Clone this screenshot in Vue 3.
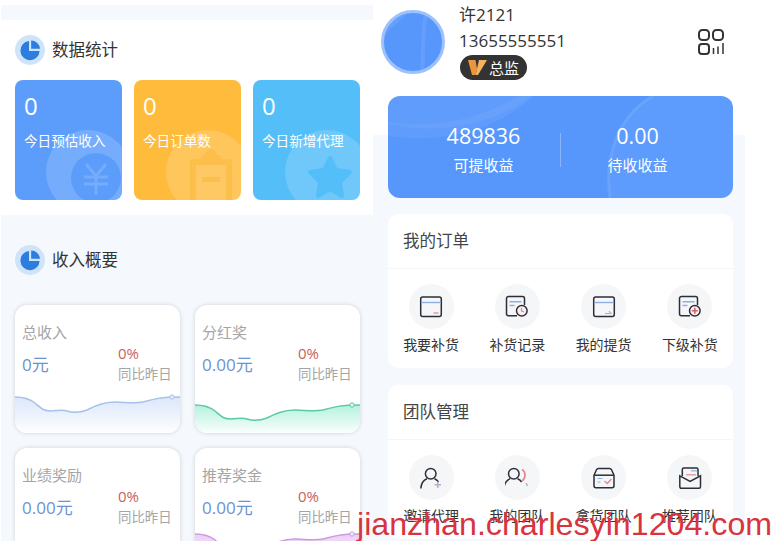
<template>
  <div class="page">
    <!-- 左栏 -->
    <section class="col left">
      <div class="stats">
        <div class="sec-head">
          <svg class="pie" viewBox="0 0 30 30">
            <circle cx="15" cy="15" r="15" fill="#cfe4fa" />
            <path d="M14 6A9.6 9.6 0 1 0 24.6 16H14Z" fill="#2b7de0" />
            <path d="M16.2 5.6A8.8 8.8 0 0 1 25 13.8H16.2Z" fill="#2b7de0" />
          </svg>
          <h2>数据统计</h2>
        </div>
        <div class="stat-row">
          <div class="stat blue">
            <svg class="deco" viewBox="0 0 107 120">
              <circle cx="73" cy="92" r="42" fill="#fff" opacity=".16" />
              <circle cx="81" cy="98" r="25" fill="#5c9dfc" />
              <path d="M71 84l10 12 10-12M69 97h24M69 104h24M81 96v19" fill="none" stroke="#fff" stroke-opacity=".16" stroke-width="3" />
            </svg>
            <b>0</b>
            <span>今日预估收入</span>
          </div>
          <div class="stat orange">
            <svg class="deco" viewBox="0 0 107 120">
              <circle cx="74" cy="92" r="42" fill="#fff" opacity=".16" />
              <path d="M58 79h9v-1a3 3 0 0 1 3-3h1a6 6 0 0 1 12 0h1a3 3 0 0 1 3 3v1h9a2 2 0 0 1 2 2v39H56V81a2 2 0 0 1 2-2Z" fill="#fdbf4c" />
              <path d="M62 85h30v35H62Z" fill="#fec864" />
              <path d="M68 97h18v5H68Z" fill="#fdbf4c" />
            </svg>
            <b>0</b>
            <span>今日订单数</span>
          </div>
          <div class="stat sky">
            <svg class="deco" viewBox="0 0 107 120">
              <circle cx="74" cy="92" r="42" fill="#fff" opacity=".16" />
              <path d="M77 78l6 12 14 2-10 10 2 14-12-7-12 7 2-14-10-10 14-2Z" fill="#54bef8" stroke="#54bef8" stroke-width="4" stroke-linejoin="round" />
            </svg>
            <b>0</b>
            <span>今日新增代理</span>
          </div>
        </div>
      </div>

      <div class="overview">
        <div class="sec-head">
          <svg class="pie" viewBox="0 0 30 30">
            <circle cx="15" cy="15" r="15" fill="#cfe4fa" />
            <path d="M14 6A9.6 9.6 0 1 0 24.6 16H14Z" fill="#2b7de0" />
            <path d="M16.2 5.6A8.8 8.8 0 0 1 25 13.8H16.2Z" fill="#2b7de0" />
          </svg>
          <h2>收入概要</h2>
        </div>
        <div class="income-grid">
          <div v-for="item in incomes" :key="item.name" class="income">
            <p class="income-name">{{ item.name }}</p>
            <div class="income-mid">
              <strong>{{ item.value }}</strong>
              <div class="compare">
                <em>0%</em>
                <small>同比昨日</small>
              </div>
            </div>
            <svg class="chart" viewBox="0 0 165 60" preserveAspectRatio="xMinYMin slice" :style="{ height: item.chart + 'px' }">
              <defs>
                <linearGradient :id="item.id" x1="0" y1="0" x2="0" :y2="item.chart / 60">
                  <stop offset="0" :stop-color="item.fill" />
                  <stop offset="1" stop-color="#fff" />
                </linearGradient>
              </defs>
              <path :d="line + 'V60H0Z'" :fill="`url(#${item.id})`" />
              <path :d="line" fill="none" :stroke="item.stroke" stroke-width="1.5" />
              <circle cx="157" cy="4" r="2.2" fill="#e8eef8" :stroke="item.stroke" />
            </svg>
          </div>
        </div>
      </div>
    </section>

    <!-- 右栏 -->
    <section class="col right">
      <header class="user">
        <div class="avatar">
          <svg viewBox="0 0 58 58" width="58" height="58">
            <path d="M40 0C36 18 38 40 36 58H40C42 40 40 18 44 0Z" fill="#fff" opacity=".08" />
            <path d="M0 24C6 16 14 10 24 0H10L0 10Z" fill="#fff" opacity=".08" />
          </svg>
        </div>
        <div class="user-info">
          <p>许2121</p>
          <p>13655555551</p>
          <div class="badge">
            <svg viewBox="0 0 19 17" width="19" height="17">
              <path d="M0 1h7.500l1.500 9-1.500 6H4Z" fill="#e9963c" />
              <path d="M11 1h8l-9 15H7.500Z" fill="#f5b060" />
            </svg>
            <span>总监</span>
          </div>
        </div>
        <svg class="qr" viewBox="0 0 26 26" fill="none" stroke="#333" stroke-width="2">
          <rect x="1" y="1" width="10" height="10" rx="3.5" />
          <rect x="15" y="1" width="10" height="10" rx="3.5" />
          <rect x="1" y="15" width="10" height="10" rx="3" />
          <path d="M15.500 19v6M20 17.500v7.500M25 14v11" stroke-width="1.500" />
        </svg>
      </header>

      <div class="earn">
        <svg class="earn-bg" viewBox="0 0 345 102" preserveAspectRatio="none">
          <path d="M0 0H145C110 35 50 48 0 40Z" fill="#fff" opacity=".05" />
          <path d="M0 28C55 40 105 28 145 0H130C95 22 50 33 0 26Z" fill="#fff" opacity=".05" />
          <path d="M222 102C216 60 230 20 265 0H345V102Z" fill="#fff" opacity=".04" />
          <path d="M222 102C216 60 230 20 265 0" fill="none" stroke="#fff" stroke-opacity=".1" stroke-width="3" />
        </svg>
        <div class="earn-col">
          <b>489836</b>
          <span>可提收益</span>
        </div>
        <i class="earn-line"></i>
        <div class="earn-col">
          <b>0.00</b>
          <span>待收收益</span>
        </div>
      </div>

      <div class="panel">
        <h3>我的订单</h3>
        <div class="menu">
          <div v-for="m in orders" :key="m.label" class="menu-item">
            <div class="menu-icon">
              <svg viewBox="0 0 24 24" width="24" height="24" fill="none" v-html="m.icon"></svg>
            </div>
            <span>{{ m.label }}</span>
          </div>
        </div>
      </div>

      <div class="panel">
        <h3>团队管理</h3>
        <div class="menu">
          <div v-for="m in teams" :key="m.label" class="menu-item">
            <div class="menu-icon">
              <svg viewBox="0 0 24 24" width="24" height="24" fill="none" v-html="m.icon"></svg>
            </div>
            <span>{{ m.label }}</span>
          </div>
        </div>
      </div>
    </section>

    <div class="watermark">jianzhan.charlesyin1204.com</div>
  </div>
</template>

<script setup>
const line =
  "M0 4C8 4 15 6 20 10C26 15 28 18 36 18C42 18 46 16 52 18C58 20 64 20 72 17C80 13 88 9 100 9C110 9 118 11 128 9C138 6 146 4 165 4";

const incomes = [
  { id: "g1", name: "总收入", value: "0元", chart: 40, fill: "#dce7fa", stroke: "#a5c2e8" },
  { id: "g2", name: "分红奖", value: "0.00元", chart: 32, fill: "#b4f2de", stroke: "#5cc9a7" },
  { id: "g3", name: "业绩奖励", value: "0.00元", chart: 34, fill: "#dce7fa", stroke: "#a5c2e8" },
  { id: "g4", name: "推荐奖金", value: "0.00元", chart: 46, fill: "#eccff5", stroke: "#c99ae0" },
];

const dark = 'stroke="#2c2f3a" stroke-width="1.5"';
const blue = 'stroke="#8fb0e0" stroke-width="1.4"';
const card = `<rect x="1.7" y="2" width="20.600" height="19.500" rx="2" ${dark}/><path d="M2.500 7.500h19" ${blue}/>`;
const doc = (extra) =>
  `<path d="M12 20.800H3.500a2 2 0 0 1-2-2V3.500a2 2 0 0 1 2-2h14a2 2 0 0 1 2 2V10" ${dark}/><path d="M4.500 6.800h12M4.500 10.500h5" ${blue}/><circle cx="16.800" cy="15.800" r="5.300" fill="#fbeef0" ${dark}/>${extra}`;

const orders = [
  { label: "我要补货", icon: card + '<path d="M14.500 18h5" stroke="#d9a0a8" stroke-width="1.500"/>' },
  { label: "补货记录", icon: doc('<path d="M16.500 13v3l2.500 1" stroke="#d9808c" stroke-width="1.100"/>') },
  { label: "我的提货", icon: card + '<path d="M13 18.500h6l-2-2.500" stroke="#d9a0a8" stroke-width="1.200"/>' },
  { label: "下级补货", icon: doc('<path d="M16.800 12.800v6M13.800 15.800h6" stroke="#d9606c" stroke-width="1.600"/>') },
];

const head = (x) =>
  `<g transform="translate(${x} 0)" ${dark}><circle cx="11.700" cy="7.800" r="5.300"/><path d="M1.800 22.500C2.200 17.500 4.500 14.200 8 12.800M15.500 12.800C17 13.500 18.500 14.500 19.500 16"/></g>`;

const teams = [
  { label: "邀请代理", icon: head(0) + '<path d="M18.800 15.500v6.500M15.500 18.700h6.500" stroke="#c0a8cc" stroke-width="1.500"/>' },
  { label: "我的团队", icon: head(-2.900) + '<path d="M17 3.500c4 2 4 9 0 11.500" stroke="#e08a90" stroke-width="1.700"/><path d="M21 17l1.500 3" stroke="#a8a8c0" stroke-width="1.300"/>' },
  { label: "拿货团队", icon: `<path d="M2 9.200l2.500-5.500a2 2 0 0 1 1.800-1.200h11.400a2 2 0 0 1 1.800 1.200L22 9.200v10.600a2 2 0 0 1-2 2H4a2 2 0 0 1-2-2Z" ${dark}/><path d="M2 9.200h20" ${dark}/><path d="M5.500 12.500h5M5.500 16h3" stroke="#8fb0e0" stroke-width="1.200"/><path d="M12.500 15l2.800 2.500 4.200-4.500" stroke="#e08a90" stroke-width="1.400"/>` },
  { label: "推荐团队", icon: `<path d="M4.300 10V3.500a1.500 1.500 0 0 1 1.500-1.500h12.700a1.500 1.500 0 0 1 1.500 1.500V10" ${dark}/><path d="M1.800 9.800l10.300 5.500 10.400-5.500v11a1.500 1.500 0 0 1-1.500 1.500H3.300a1.500 1.500 0 0 1-1.500-1.500Z" ${dark}/><path d="M13 4.800h6" stroke="#8fb0e0" stroke-width="1.200"/><path d="M8 8.800h10" stroke="#e08a90" stroke-width="1.200"/>` },
];
</script>

<style scoped>
.page {
  position: relative;
  display: flex;
  width: 772px;
  height: 541px;
  overflow: hidden;
  background: #fff;
  font-family: "Open Sans", "Noto Sans CJK SC", sans-serif;
  color: #333;
}
.col {
  flex: none;
  box-sizing: border-box;
}
p,
h2,
h3 {
  margin: 0;
  font-weight: 400;
}

/* 左栏 */
.left {
  width: 372px;
  margin: 5px 0 0 1px;
  padding-top: 15px;
  background: #f5f8fd;
}
.stats {
  height: 195px;
  padding: 15px 13px 0 14px;
  box-sizing: border-box;
  background: #fff;
}
.sec-head {
  display: flex;
  align-items: center;
  gap: 7px;
  height: 30px;
}
.sec-head h2 {
  font-size: 16.5px;
  line-height: 30px;
  color: #333;
}
.pie {
  width: 30px;
  height: 30px;
}
.stat-row {
  display: grid;
  grid-template-columns: repeat(3, 107px);
  gap: 12px;
  margin-top: 15px;
}
.stat {
  position: relative;
  height: 120px;
  overflow: hidden;
  border-radius: 8px;
  padding: 12px 9px 0;
  box-sizing: border-box;
  color: #fff;
}
.stat.blue {
  background: #5c9dfc;
}
.stat.orange {
  background: #febb3c;
}
.stat.sky {
  background: #54bef8;
}
.deco {
  position: absolute;
  inset: 0;
  width: 107px;
  height: 120px;
}
.stat b,
.stat span {
  position: relative;
  display: block;
  font-weight: 400;
}
.stat b {
  font-size: 24px;
  line-height: 27px;
}
.stat span {
  margin-top: 12px;
  font-size: 13.6px;
  line-height: 20px;
  white-space: nowrap;
}
.overview {
  padding: 30px 13px 0 14px;
}
.income-grid {
  display: grid;
  grid-template-columns: repeat(2, 165px);
  grid-auto-rows: 128px;
  gap: 15px;
  margin-top: 30px;
}
.income {
  display: flex;
  flex-direction: column;
  overflow: hidden;
  border-radius: 12px;
  background: #fff;
  box-shadow: 0 0 4px rgba(0, 0, 0, 0.16);
  padding-top: 18px;
}
.income-name {
  padding-left: 7px;
  font-size: 15px;
  line-height: 18px;
  color: #a5a5a5;
}
.income-mid {
  display: flex;
  justify-content: space-between;
  padding: 2px 8px 0 7px;
}
.income-mid strong {
  margin-top: 11px;
  font-size: 17px;
  font-weight: 400;
  line-height: 22px;
  color: #6d93cf;
}
.compare {
  width: 54px;
}
.compare em,
.compare small {
  display: block;
  font-style: normal;
  line-height: 21px;
  white-space: nowrap;
}
.compare em {
  font-size: 15px;
  color: #c9605c;
}
.compare small {
  font-size: 13.4px;
  color: #a5a5a5;
}
.chart {
  display: block;
  width: 165px;
  margin-top: auto;
}

/* 右栏 */
.right {
  width: 372px;
  padding: 0 12px 0 15px;
  background: linear-gradient(#fff 135px, #f5f8fc 135px);
}
.user {
  display: flex;
  align-items: flex-start;
  height: 96px;
  margin-left: -7px;
}
.avatar {
  flex: none;
  width: 58px;
  height: 58px;
  overflow: hidden;
  margin: 10px 14px 0 0;
  border: 3px solid #9cc1fb;
  border-radius: 50%;
  background: #5797fc;
}
.avatar svg {
  display: block;
}
.user-info {
  padding-top: 2px;
}
.user-info p {
  font-size: 17px;
  line-height: 26px;
  color: #333;
}
.badge {
  display: inline-flex;
  align-items: center;
  gap: 2px;
  height: 25px;
  margin: 1px 0 0 1px;
  padding: 0 8px;
  border-radius: 13px;
  background: #333;
  color: #fff;
  font-size: 15px;
}
.qr {
  width: 26px;
  height: 26px;
  margin: 29px 9px 0 auto;
}
.earn {
  position: relative;
  display: flex;
  align-items: center;
  height: 102px;
  width: 345px;
  padding: 2px 19px 0;
  box-sizing: border-box;
  overflow: hidden;
  border-radius: 12px;
  background: #5797fc;
  color: #fff;
}
.earn-bg {
  position: absolute;
  inset: 0;
  width: 100%;
  height: 100%;
}
.earn-col {
  position: relative;
  flex: 1;
  text-align: center;
}
.earn-col b,
.earn-col span {
  display: block;
  font-weight: 400;
}
.earn-col b {
  font-size: 21.500px;
  line-height: 28px;
}
.earn-col span {
  margin-top: 5px;
  font-size: 15px;
  line-height: 20px;
}
.earn-line {
  position: relative;
  width: 1px;
  height: 34px;
  margin-top: 4px;
  background: rgba(255, 255, 255, 0.3);
}
.panel {
  width: 345px;
  height: 154px;
  margin-top: 16px;
  border-radius: 10px;
  background: #fff;
}
.panel + .panel {
  margin-top: 17px;
}
.panel h3 {
  height: 55px;
  padding-left: 15px;
  box-sizing: border-box;
  border-bottom: 1px solid #f6f6f6;
  font-size: 16.5px;
  line-height: 54px;
  color: #444;
}
.menu {
  display: grid;
  grid-template-columns: repeat(4, 1fr);
  padding-top: 15px;
}
.menu-item {
  display: flex;
  flex-direction: column;
  align-items: center;
}
.menu-icon {
  display: flex;
  align-items: center;
  justify-content: center;
  width: 45px;
  height: 45px;
  border-radius: 50%;
  background: #f5f6f8;
}
.menu-item span {
  margin-top: 6px;
  font-size: 14px;
  line-height: 20px;
  color: #333;
}
.watermark {
  position: absolute;
  left: 357px;
  bottom: 0;
  font-family: "Liberation Sans", sans-serif;
  font-size: 32.200px;
  line-height: 34px;
  color: #d9333f;
  white-space: nowrap;
}
</style>
